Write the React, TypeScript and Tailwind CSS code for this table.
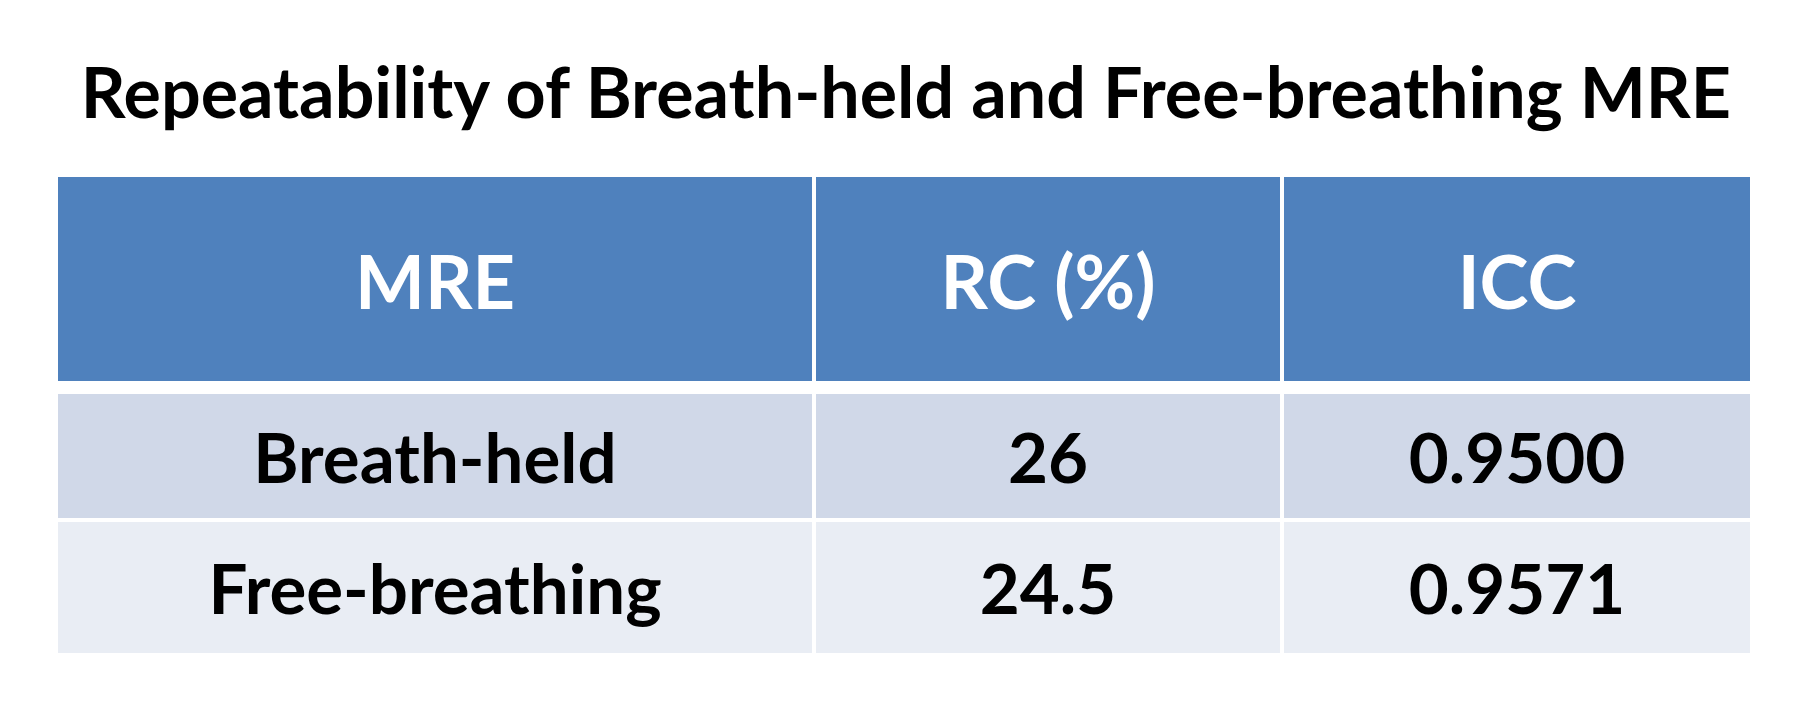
const COLS = 'grid grid-cols-[754px_464px_466px] gap-x-[4px]';

const rows = [
  { name: 'Breath-held', rc: '26', icc: '0.9500', bg: 'bg-[#d0d8e8]', h: 'h-[124px]' },
  { name: 'Free-breathing', rc: '24.5', icc: '0.9571', bg: 'bg-[#e9edf4]', h: 'h-[131px]' },
];

export default function App() {
  return (
    <div className="w-[1812px] h-[708px] bg-white font-['Lato',sans-serif] text-black">
      <div className="h-[177px] flex items-center justify-center pt-[4px]">
        <h1 className="text-[70px] font-bold leading-none">Repeatability of Breath-held and Free-breathing MRE</h1>
      </div>
      <div className="ml-[58px] w-[1692px]">
        <div className={COLS}>
          {['MRE', 'RC (%)', 'ICC'].map((h) => (
            <div key={h} className="h-[204px] bg-[#4f81bd] flex items-center justify-center text-white text-[74px] font-bold leading-none pt-[4px]">
              {h}
            </div>
          ))}
        </div>
        {rows.map((r, i) => (
          <div key={r.name} className={`${COLS} ${i === 0 ? 'mt-[13px]' : 'mt-[4px]'}`}>
            {[r.name, r.rc, r.icc].map((v, j) => (
              <div key={j} className={`${r.h} ${r.bg} flex items-center justify-center text-[69px] font-bold leading-none`}>
                {v}
              </div>
            ))}
          </div>
        ))}
      </div>
    </div>
  );
}
